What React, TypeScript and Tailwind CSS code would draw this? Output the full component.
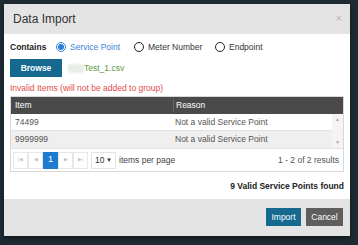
import React from 'react';

const Radio = ({ checked, label }: { checked?: boolean; label: string }) => (
  <label className="flex items-center gap-[4px]">
    <span
      className={`flex h-[10px] w-[10px] items-center justify-center rounded-full border ${
        checked ? 'border-[#2f7fd6]' : 'border-[#222] border-[1.5px]'
      }`}
    >
      {checked && <span className="h-[6px] w-[6px] rounded-full bg-[#2f7fd6]" />}
    </span>
    <span className={checked ? 'text-[#3b86d8]' : 'text-[#333]'}>{label}</span>
  </label>
);

const PagerBtn = ({ children, active }: { children: React.ReactNode; active?: boolean }) => (
  <span
    className={`flex h-[17px] w-[15px] items-center justify-center border ${
      active ? 'border-[#1e7bd0] bg-[#1e7bd0] text-[9px] text-white' : 'border-[#e8e8e8] text-[5px] text-[#c4c4c4]'
    }`}
  >
    {children}
  </span>
);

export default function App() {
  return (
    <div
      className="flex h-[245px] w-[358px] bg-[#1e2b33] pl-[4px] pt-[4px] pr-[8px] pb-[9px]"
      style={{ fontFamily: '"Liberation Sans", Arial, sans-serif' }}
    >
      <div className="flex flex-1 flex-col bg-white shadow-[0_2px_4px_rgba(0,0,0,0.5)]">
        <div className="flex h-[32px] items-center justify-between bg-[#e4e4e4] pl-[9px] pr-[8px]">
          <span className="text-[12px] text-[#333]">Data Import</span>
          <span className="text-[11px] leading-none text-[#b5b5b5]">×</span>
        </div>

        <div className="flex flex-1 flex-col px-[6px] pt-[7px] text-[8.5px]">
          <div className="flex items-center">
            <span className="w-[46px] font-bold text-[#222]">Contains</span>
            <div className="w-[78px]"><Radio checked label="Service Point" /></div>
            <div className="w-[81px]"><Radio label="Meter Number" /></div>
            <Radio label="Endpoint" />
          </div>

          <div className="mt-[6px] flex items-center">
            <button className="h-[18px] w-[52px] bg-[#15698f] text-[8.5px] font-bold text-white">Browse</button>
            <span className="ml-[6px] h-[9px] w-[16px] rounded-[2px] bg-[#e6eee6] blur-[1px]" />
            <span className="text-[#5a9a3a]">Test_1.csv</span>
          </div>

          <div className="mt-[5px] text-[#e14b4b]">Invalid Items (will not be added to group)</div>

          <div className="mt-[1px] border border-[#d8d8d8]">
            <div className="flex h-[17px] items-center bg-[#4a4a4a] text-white">
              <span className="w-[162px] pl-[4px]">Item</span>
              <span className="border-l border-[#666] pl-[2px]">Reason</span>
            </div>
            <div className="flex">
              <div className="flex-1">
                <div className="flex h-[17px] items-center border-b border-[#e3e3e3] text-[#555]">
                  <span className="w-[162px] pl-[4px]">74499</span>
                  <span className="pl-[2px]">Not a valid Service Point</span>
                </div>
                <div className="flex h-[17px] items-center bg-[#efefef] text-[#555]">
                  <span className="w-[162px] pl-[4px]">9999999</span>
                  <span className="pl-[2px]">Not a valid Service Point</span>
                </div>
              </div>
              <div className="flex w-[11px] flex-col items-center justify-between bg-[#f4f4f4] py-[2px] text-[5px] text-[#aaa]">
                <span>▲</span>
                <span>▼</span>
              </div>
            </div>
            <div className="flex h-[23px] items-center border-t border-[#e3e3e3] pl-[2px] pr-[4px]">
              <PagerBtn>|◀</PagerBtn>
              <PagerBtn>◀</PagerBtn>
              <PagerBtn active>1</PagerBtn>
              <PagerBtn>▶</PagerBtn>
              <PagerBtn>▶|</PagerBtn>
              <span className="ml-[3px] flex h-[17px] w-[25px] items-center justify-between border border-[#e4e4e4] px-[3px] text-[#333]">
                10<span className="text-[6px]">▼</span>
              </span>
              <span className="ml-[3px] text-[#444]">items per page</span>
              <span className="ml-auto text-[#555]">1 - 2 of 2 results</span>
            </div>
          </div>

          <div className="mt-[8px] text-right font-bold text-[#222]">9 Valid Service Points found</div>
        </div>

        <div className="mt-[6px] flex h-[40px] items-center justify-end gap-[5px] bg-[#e4e4e4] pr-[7px]">
          <button className="h-[18px] w-[35px] bg-[#15698f] text-[8.5px] text-white">Import</button>
          <button className="h-[18px] w-[37px] bg-[#5e5e5e] text-[8.5px] text-white">Cancel</button>
        </div>
      </div>
    </div>
  );
}
